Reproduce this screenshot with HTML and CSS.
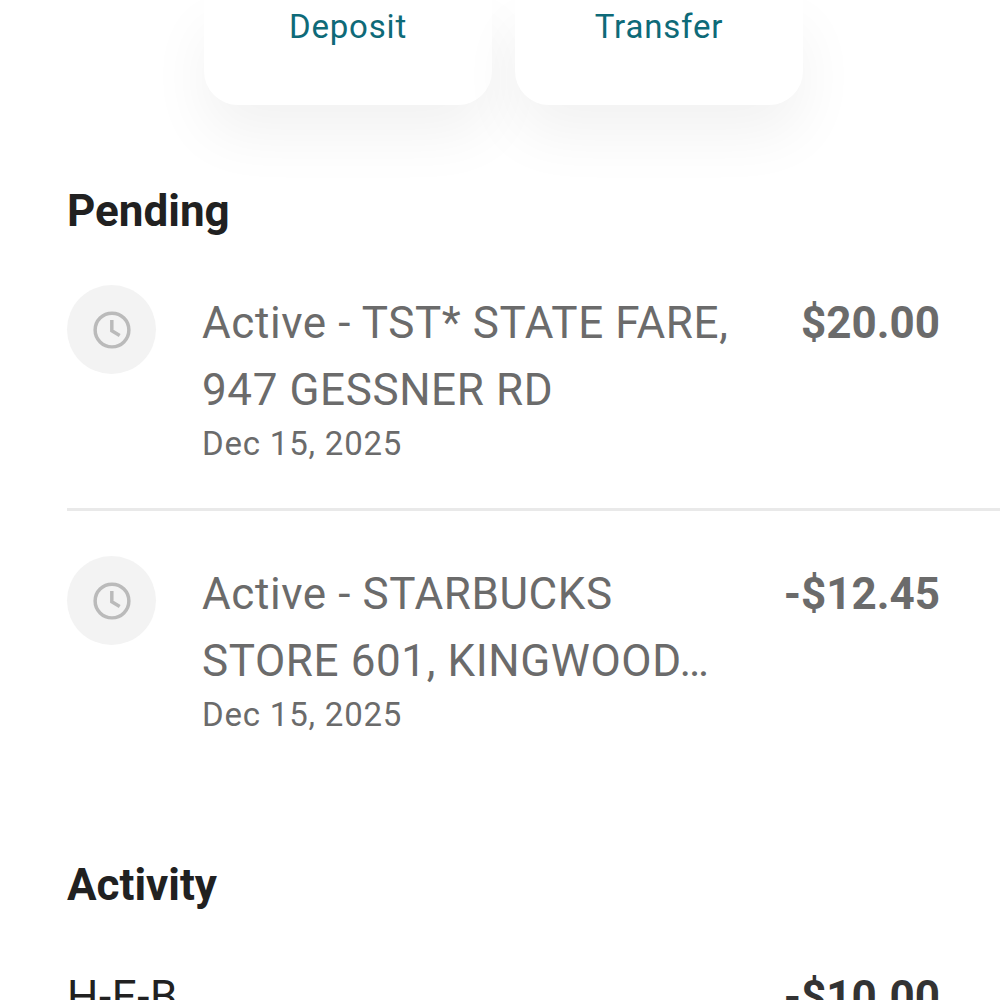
FILE: index.html
```html
<!DOCTYPE html>
<html lang="en">
<head>
  <meta charset="UTF-8">
  <meta name="viewport" content="width=device-width, initial-scale=1.0">
  <title>Account</title>
  <link rel="stylesheet" href="styles.css">
</head>
<body>

  <div class="actions">
    <div class="action-card">Deposit</div>
    <div class="action-card">Transfer</div>
  </div>

  <h2 class="section-title pending-title">Pending</h2>

  <div class="row">
    <div class="row-icon">
      <svg viewBox="0 0 24 24" width="44" height="44" fill="none" stroke="#bababa" stroke-width="1.9">
        <circle cx="12" cy="12" r="9.2"/>
        <path d="M11.9 6.6V12.4L16.2 15"/>
      </svg>
    </div>
    <div class="row-text">
      <div class="row-name">Active - TST* STATE FARE,<br>947 GESSNER RD</div>
      <div class="row-date">Dec 15, 2025</div>
    </div>
    <div class="row-amount">$20.00</div>
  </div>

  <div class="divider"></div>

  <div class="row">
    <div class="row-icon">
      <svg viewBox="0 0 24 24" width="44" height="44" fill="none" stroke="#bababa" stroke-width="1.9">
        <circle cx="12" cy="12" r="9.2"/>
        <path d="M11.9 6.6V12.4L16.2 15"/>
      </svg>
    </div>
    <div class="row-text">
      <div class="row-name">Active - STARBUCKS<br>STORE 601, KINGWOOD…</div>
      <div class="row-date">Dec 15, 2025</div>
    </div>
    <div class="row-amount">-$12.45</div>
  </div>

  <h2 class="section-title activity-title">Activity</h2>

  <div class="activity-row">
    <div class="activity-name">H-E-B</div>
    <div class="activity-amount">-$10.00</div>
  </div>

</body>
</html>
```

FILE: styles.css
```css
html, body {
  height: 1000px;
  overflow: hidden;
}

body {
  margin: 0;
  background-color: #fff;
  font-family: Roboto, "Liberation Sans", sans-serif;
}

.actions {
  display: flex;
  gap: 23px;
  padding-left: 204px;
}

.action-card {
  width: 288px;
  height: 105px;
  box-sizing: border-box;
  padding-top: 5px;
  background-color: #fff;
  border-radius: 0 0 34px 34px;
  box-shadow: 0 30px 60px rgba(0, 0, 0, 0.055);
  text-align: center;
  color: #0e6a78;
  font-size: 33px;
  letter-spacing: 0.8px;
  line-height: 43px;
}

.section-title {
  margin: 0;
  padding-left: 67px;
  color: #212121;
  font-size: 44px;
  font-weight: 700;
  line-height: 50px;
}

.pending-title {
  margin-top: 81px;
}

.activity-title {
  margin-top: 125px;
}

.row {
  display: flex;
  padding: 0 60px 0 67px;
  margin-top: 49px;
}

.divider + .row {
  margin-top: 45px;
}

.row-icon {
  flex: none;
  display: flex;
  align-items: center;
  justify-content: center;
  width: 89px;
  height: 89px;
  border-radius: 50%;
  background-color: #f3f3f3;
}

.row-text {
  flex: 1;
  margin-left: 46px;
  padding-top: 5px;
  color: #6b6b6b;
}

.row-name {
  font-size: 44px;
  letter-spacing: 0.6px;
  line-height: 67px;
}

.row-date {
  font-size: 33px;
  letter-spacing: 0.8px;
  line-height: 40px;
}

.row-amount {
  padding-top: 5px;
  color: #6b6b6b;
  font-size: 44px;
  font-weight: 700;
  line-height: 67px;
}

.divider {
  height: 3px;
  margin: 44px 0 0 67px;
  background-color: #e9e9e9;
}

.activity-row {
  display: flex;
  justify-content: space-between;
  padding: 0 60px 0 67px;
  margin-top: 54px;
  font-size: 44px;
  line-height: 67px;
}

.activity-name {
  color: #212121;
  letter-spacing: 0.6px;
}

.activity-amount {
  color: #333;
  font-weight: 700;
}
```
